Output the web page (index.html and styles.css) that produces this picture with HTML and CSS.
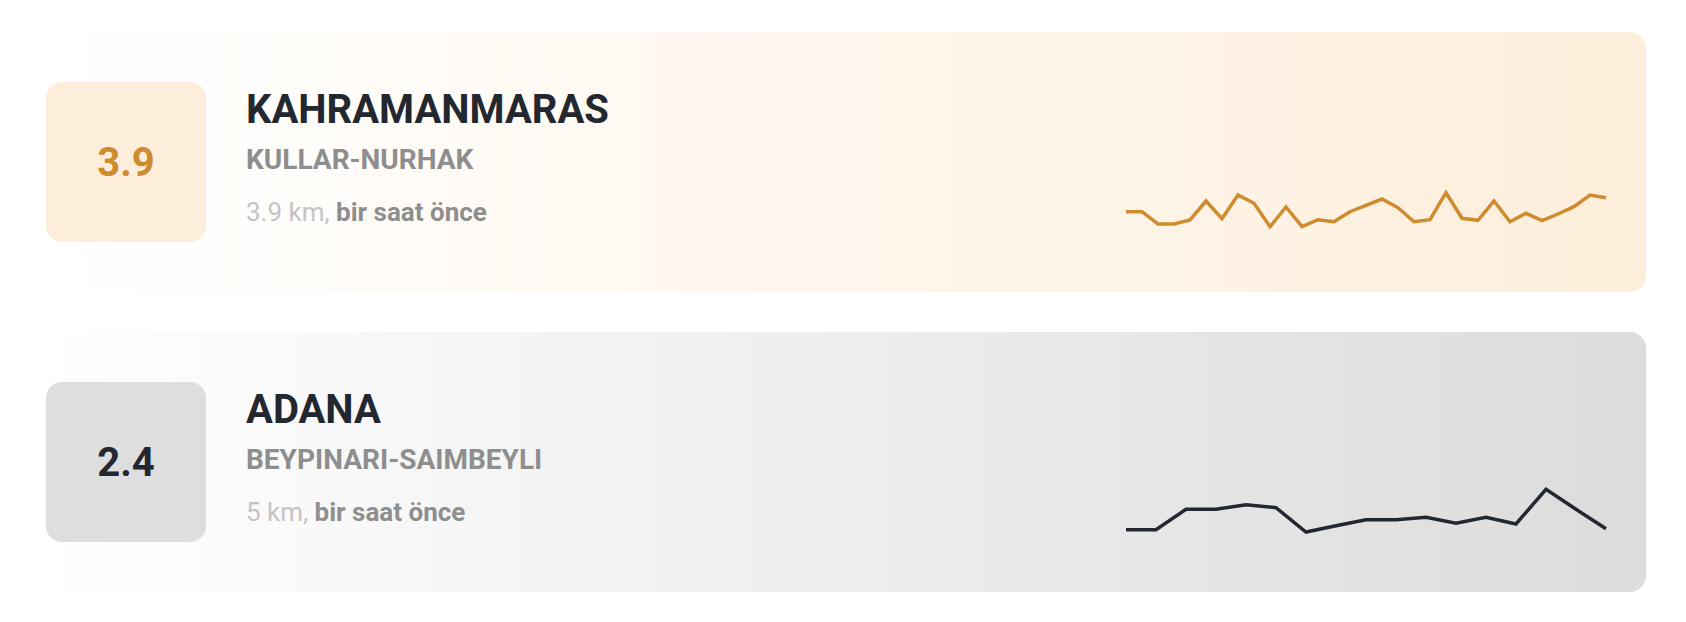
FILE: index.html
```html
<!DOCTYPE html>
<html lang="tr">
<head>
<meta charset="utf-8">
<title>Depremler</title>
<link rel="stylesheet" href="styles.css">
</head>
<body>
<main class="list">
  <article class="quake quake--warn">
    <div class="mag">3.9</div>
    <div class="info">
      <h2 class="city">KAHRAMANMARAS</h2>
      <div class="place">KULLAR-NURHAK</div>
      <div class="meta">3.9 km, <b>bir saat önce</b></div>
    </div>
    <svg class="spark" viewBox="0 0 480 160" width="480" height="160">
      <polyline points="0,129.7 16,129.7 32,142 48,142 64,138 80,119 96,136.7 112,113 128,121.3 144,144.7 160,125 176,144.7 192,137.7 208,139.7 224,129.7 240,123.3 256,117 272,125.7 288,139.7 304,137.7 320,110.7 336,136.3 352,138.3 368,119 384,139.7 400,131.3 416,138.7 432,132 448,124.7 464,113 480,115.7"/>
    </svg>
  </article>
  <article class="quake quake--calm">
    <div class="mag">2.4</div>
    <div class="info">
      <h2 class="city">ADANA</h2>
      <div class="place">BEYPINARI-SAIMBEYLI</div>
      <div class="meta">5 km, <b>bir saat önce</b></div>
    </div>
    <svg class="spark" viewBox="0 0 480 160" width="480" height="160">
      <polyline points="0,147.7 30,147.7 60,127.3 90,127.3 120,122.7 150,125.7 180,150 210,143.7 240,137.7 270,137.7 300,135.3 330,141.3 360,135.3 390,142 420,107.3 450,127.3 480,146.7"/>
    </svg>
  </article>
</main>
</body>
</html>
```
FILE: styles.css
```css
* { box-sizing: border-box; }
html, body { margin: 0; padding: 0; background: #fff; }
body { font-family: Roboto, "Liberation Sans", Arial, sans-serif; }

.list {
  display: flex;
  flex-direction: column;
  gap: 40px;
  padding: 32px 40px 0 40px;
}

.quake {
  display: flex;
  align-items: flex-start;
  height: 260px;
  padding: 50px 40px 50px 6px;
  border-radius: 16px;
}
.quake--warn { background: linear-gradient(90deg, rgba(253,238,219,0) 0%, #fdeedb 100%); }
.quake--calm { background: linear-gradient(90deg, rgba(220,220,220,0) 0%, #dcdcdc 100%); }

.mag {
  flex: 0 0 160px;
  width: 160px;
  height: 160px;
  border-radius: 16px;
  display: flex;
  align-items: center;
  justify-content: center;
  font-size: 40px;
  font-weight: 700;
}
.quake--warn .mag { background: #fdeedb; color: #cf8c2e; }
.quake--calm .mag { background: #dedede; color: #23272f; }

.info {
  margin-left: 40px;
  padding-top: 4px;
  display: flex;
  flex-direction: column;
}
.city {
  margin: 0;
  font-size: 40px;
  line-height: 48px;
  font-weight: 700;
  color: #23272f;
}
.place {
  margin-top: 10px;
  font-size: 28px;
  line-height: 32px;
  font-weight: 700;
  color: #8e8e8e;
}
.meta {
  margin-top: 20px;
  font-size: 26px;
  line-height: 32px;
  color: #c4c4c4;
}
.meta b { color: #8e8e8e; font-weight: 700; }

.spark {
  margin-left: auto;
  flex: 0 0 480px;
  overflow: visible;
}
.spark polyline {
  fill: none;
  stroke-width: 3.5;
  stroke-linejoin: miter;
}
.quake--warn .spark polyline { stroke: #cf8c2e; }
.quake--calm .spark polyline { stroke: #23272f; }
```
